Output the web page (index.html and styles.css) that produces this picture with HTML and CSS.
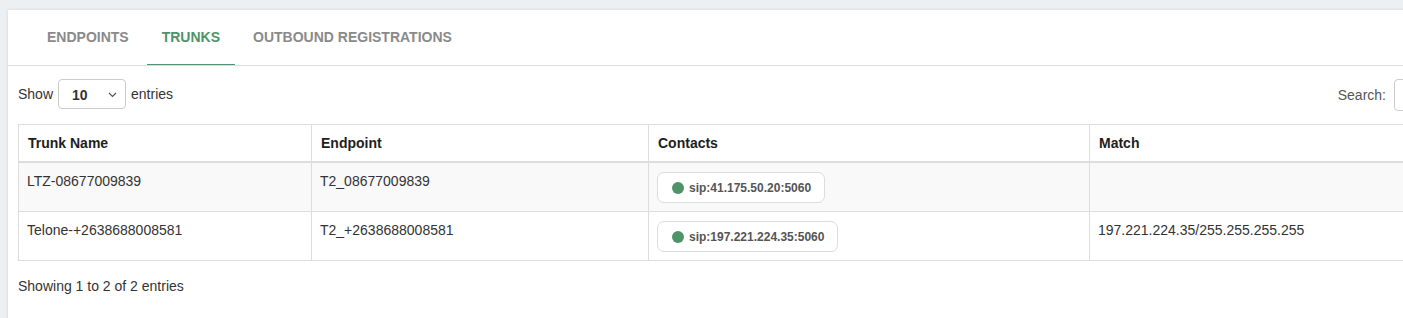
FILE: index.html
```html
<!DOCTYPE html>
<html>
<head>
<meta charset="utf-8">
<link rel="stylesheet" href="styles.css">
</head>
<body>
<div class="card">
  <ul class="tabs">
    <li class="tab">ENDPOINTS</li>
    <li class="tab active">TRUNKS</li>
    <li class="tab">OUTBOUND REGISTRATIONS</li>
  </ul>
  <div class="content">
    <div class="toolbar">
      <div class="length">
        <span>Show</span>
        <div class="select"><span class="sel-val">10</span>
          <svg class="chev" width="9" height="6" viewBox="0 0 9 6"><path d="M1 1 L4.5 4.5 L8 1" fill="none" stroke="#555" stroke-width="1.2"/></svg>
        </div>
        <span>entries</span>
      </div>
      <div class="search">
        <span>Search:</span>
        <div class="input"></div>
      </div>
    </div>
    <table class="grid">
      <colgroup>
        <col class="c1"><col class="c2"><col class="c3"><col class="c4">
      </colgroup>
      <thead>
        <tr><th>Trunk Name</th><th>Endpoint</th><th>Contacts</th><th>Match</th></tr>
      </thead>
      <tbody>
        <tr class="odd">
          <td>LTZ-08677009839</td>
          <td>T2_08677009839</td>
          <td><span class="pill"><span class="dot"></span>sip:41.175.50.20:5060</span></td>
          <td></td>
        </tr>
        <tr>
          <td>Telone-+2638688008581</td>
          <td>T2_+2638688008581</td>
          <td><span class="pill"><span class="dot"></span>sip:197.221.224.35:5060</span></td>
          <td>197.221.224.35/255.255.255.255</td>
        </tr>
      </tbody>
    </table>
    <div class="info">Showing 1 to 2 of 2 entries</div>
  </div>
</div>
</body>
</html>
```

FILE: styles.css
```css
html, body {
  margin: 0;
  padding: 0;
}
body {
  background: #ecf0f3;
  font-family: "Liberation Sans", Arial, sans-serif;
  font-size: 14px;
  color: #333;
  overflow: hidden;
  width: 1403px;
  height: 318px;
}
.card {
  margin: 10px 0 0 8px;
  width: 1566px;
  height: 330px;
  background: #fff;
  box-shadow: 0 0 3px rgba(0, 0, 0, 0.12);
}
.tabs {
  list-style: none;
  margin: 0;
  padding: 0 0 0 24px;
  display: flex;
  gap: 3px;
  border-bottom: 1px solid #dddddd;
}
.tab {
  padding: 17px 15px 17px;
  line-height: 20px;
  font-weight: bold;
  font-size: 14px;
  color: #8a8a8a;
  border-bottom: 1px solid transparent;
}
.tab.active {
  color: #4e9468;
  border-bottom-color: #4e9468;
}
.content {
  padding: 13px 10px 0 10px;
}
.toolbar {
  display: flex;
  justify-content: space-between;
  align-items: flex-start;
  height: 30px;
}
.length {
  display: flex;
  align-items: center;
  gap: 5px;
  height: 30px;
}
.select {
  box-sizing: border-box;
  width: 68px;
  height: 30px;
  border: 1px solid #ccc;
  border-radius: 4px;
  display: flex;
  align-items: center;
  justify-content: space-between;
  padding: 2px 8px 0 13px;
}
.sel-val {
  font-weight: bold;
  color: #333;
}
.chev {
  display: block;
}
.search {
  display: flex;
  align-items: center;
  gap: 8px;
  height: 32px;
  color: #555;
}
.input {
  box-sizing: border-box;
  width: 170px;
  height: 32px;
  border: 1px solid #ccc;
  border-radius: 4px;
  flex: none;
}
.grid {
  margin-top: 15px;
  border-collapse: collapse;
  table-layout: fixed;
  width: 100%;
  border: 1px solid #dddddd;
}
.c1 { width: 293px; }
.c2 { width: 337px; }
.c3 { width: 441px; }
.grid th, .grid td {
  border: 1px solid #dddddd;
  line-height: 20px;
  text-align: left;
  vertical-align: top;
}
.grid th {
  font-weight: bold;
  color: #1e1e1e;
  border-bottom: 2px solid #dddddd;
  padding: 8px 9px 8px 9px;
}
.grid td {
  padding: 8px 9px 8px 8px;
}
.grid tr.odd td {
  background: #f9f9f9;
}
.pill {
  display: inline-flex;
  align-items: center;
  gap: 5px;
  box-sizing: border-box;
  height: 31px;
  padding: 0 13px 0 14px;
  border: 1px solid #dcdcdc;
  border-radius: 7px;
  background: #fff;
  font-size: 12px;
  font-weight: bold;
  color: #555;
  margin-top: 1px;
  vertical-align: top;
}
.dot {
  width: 12px;
  height: 12px;
  border-radius: 50%;
  background: #4e9468;
  flex: none;
}
.info {
  padding-top: 15px;
  line-height: 20px;
  font-size: 14px;
  color: #333;
}
```
